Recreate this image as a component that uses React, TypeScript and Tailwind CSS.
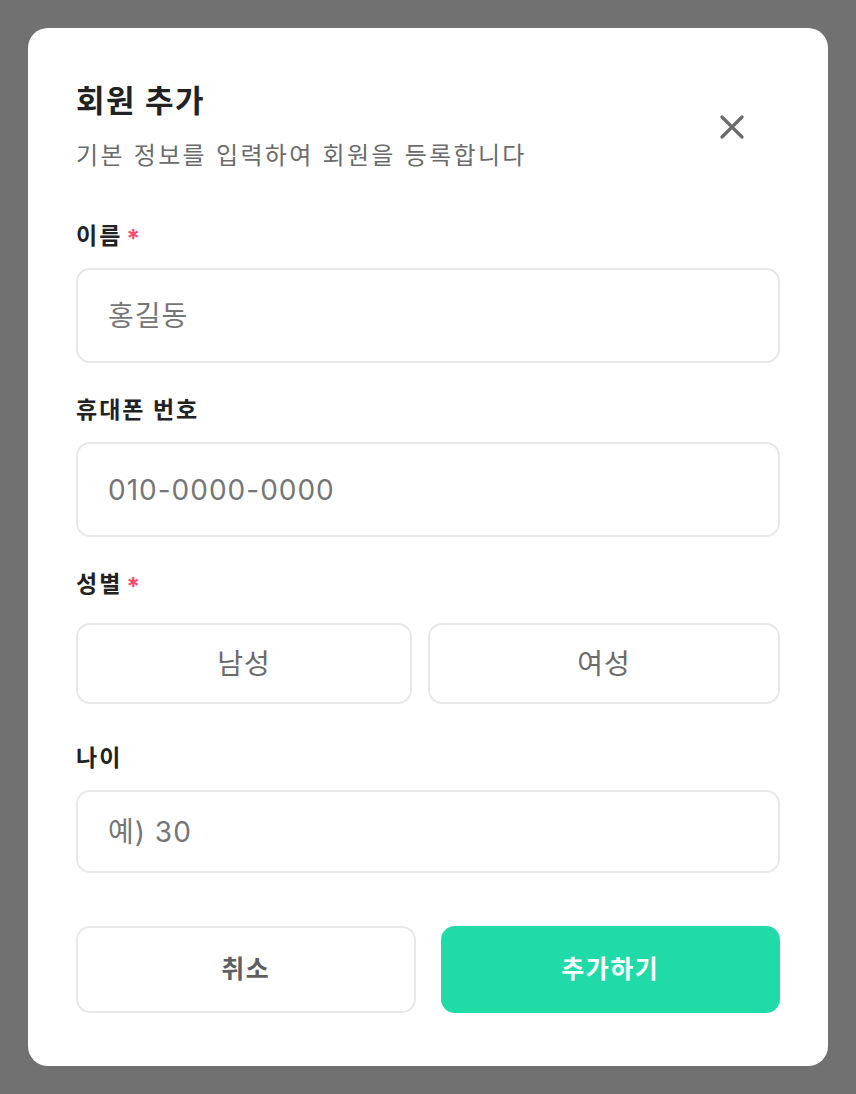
import { useState } from "react"

function Label({ text, required }: { text: string; required?: boolean }) {
  return (
    <p className="flex items-start h-[32px] text-[23px] leading-[32px] font-bold tracking-[2px] text-[#222222]">
      {text}
      {required && <span className="ml-[4px] mt-[3px] text-[25px] leading-[32px] text-[#ff4d6d]">*</span>}
    </p>
  )
}

const inputCls =
  "mt-[16px] w-full rounded-[14px] border-2 border-[#e8e8e8] px-[30px] text-[28px] tracking-[1px] text-[#222] placeholder-[#767676] outline-none"

export default function App() {
  const [gender, setGender] = useState<"m" | "f" | null>(null)

  return (
    <div className="min-h-screen w-full bg-[#717171] pt-[28px] pl-[28px] font-['Inter','Noto_Sans_CJK_KR',sans-serif]">
      <div className="w-[800px] h-[1038px] bg-white rounded-[20px] px-[48px] pt-[53px]">
        {/* Header */}
        <div className="flex items-start justify-between">
          <div>
            <h1 className="text-[31px] leading-[40px] font-bold tracking-[1.5px] text-[#222222]">회원 추가</h1>
            <p className="mt-[19px] text-[24px] leading-[32px] tracking-[2.3px] text-[#6b6b6b]">기본 정보를 입력하여 회원을 등록합니다</p>
          </div>
          <button className="mt-[34px] mr-[36px] text-[#6b6b6b]">
            <svg width="24" height="24" viewBox="0 0 24 24" fill="none" stroke="currentColor" strokeWidth="3.2" strokeLinecap="round">
              <path d="M2 2L22 22M22 2L2 22" />
            </svg>
          </button>
        </div>

        {/* 이름 */}
        <div className="mt-[48px]">
          <Label text="이름" required />
          <input placeholder="홍길동" className={`${inputCls} h-[95px]`} />
        </div>

        {/* 휴대폰 번호 */}
        <div className="mt-[31px]">
          <Label text="휴대폰 번호" />
          <input placeholder="010-0000-0000" className={`${inputCls} h-[95px]`} />
        </div>

        {/* 성별 */}
        <div className="mt-[31px]">
          <Label text="성별" required />
          <div className="mt-[23px] grid grid-cols-[336px_1fr] gap-[16px]">
            {([["m", "남성"], ["f", "여성"]] as const).map(([k, t]) => (
              <button
                key={k}
                onClick={() => setGender(k)}
                className={`h-[81px] rounded-[14px] border-2 text-[28px] tracking-[1px] ${gender === k ? "border-[#20dba8] text-[#20dba8]" : "border-[#e8e8e8] text-[#6b6b6b]"}`}
              >
                {t}
              </button>
            ))}
          </div>
        </div>

        {/* 나이 */}
        <div className="mt-[38px]">
          <Label text="나이" />
          <input placeholder="예) 30" className={`${inputCls} h-[83px]`} />
        </div>

        {/* Actions */}
        <div className="mt-[53px] grid grid-cols-2 gap-[25px]">
          <button className="h-[87px] rounded-[14px] border-2 border-[#e8e8e8] text-[25px] font-semibold tracking-[1.5px] text-[#5f5f5f]">취소</button>
          <button className="h-[87px] rounded-[14px] bg-[#20dba8] text-[25px] font-semibold tracking-[1.5px] text-white">추가하기</button>
        </div>
      </div>
    </div>
  )
}
